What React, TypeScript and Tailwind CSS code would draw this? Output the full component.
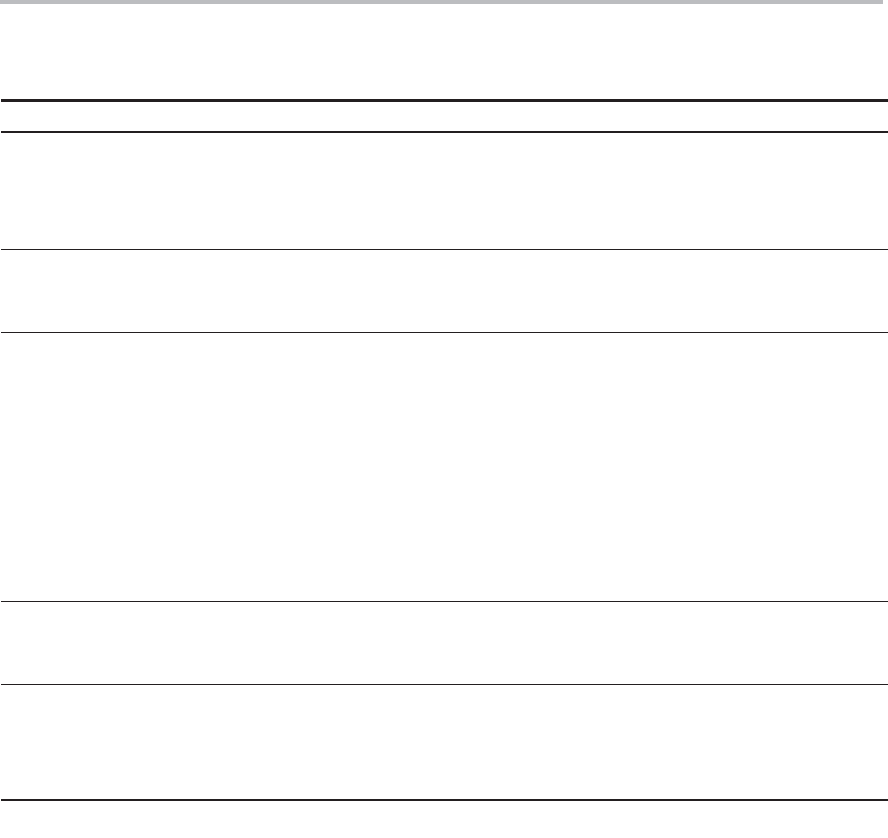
import React from 'react'

// empty rule table: heights of the body rows (border included), top to bottom
const rows = [117, 83, 269, 83]

export default function App() {
  return (
    <div className="w-[888px] h-[838px] bg-white font-['Liberation_Sans',sans-serif]">
      <div className="w-[883px] h-1 bg-[#bcbdc0]" />
      <div className="ml-px mt-[95px] border-t-[3px] border-b-2 border-[#231f20]">
        <div className="h-[31px] border-b-2 border-[#231f20]" />
        {rows.map((h, i) => (
          <div key={i} className="border-b border-[#231f20]" style={{ height: h }} />
        ))}
        <div className="h-[114px]" />
      </div>
    </div>
  )
}
